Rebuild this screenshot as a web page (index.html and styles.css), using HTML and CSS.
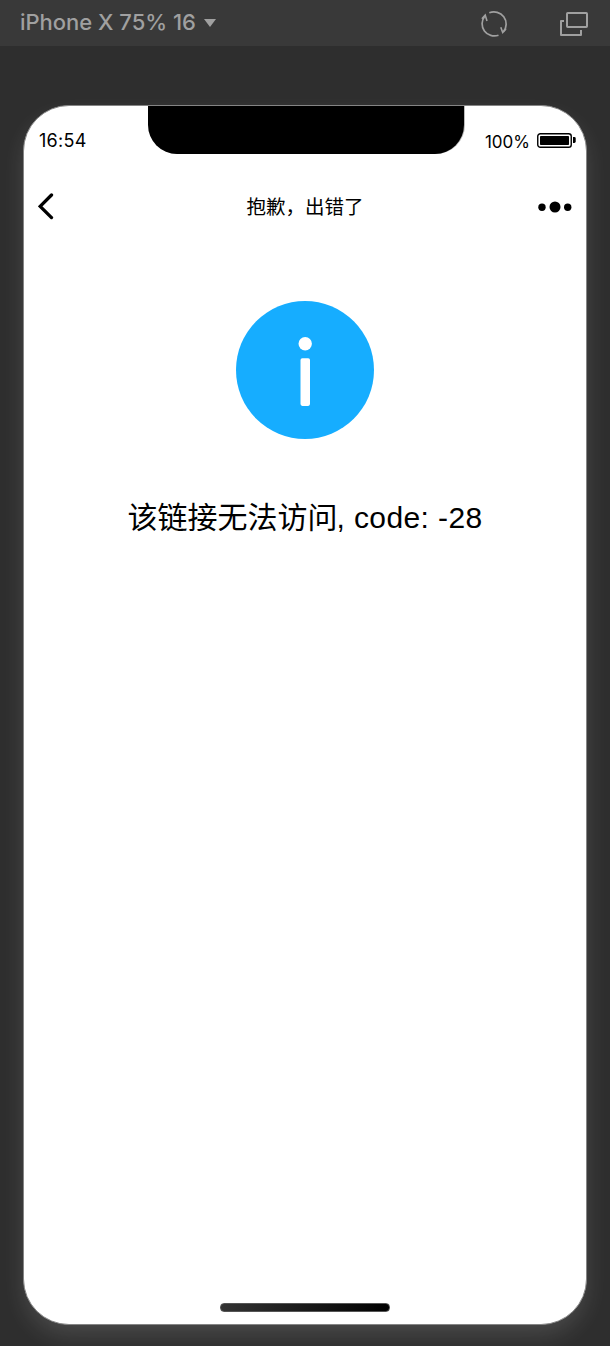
FILE: index.html
```html
<!DOCTYPE html>
<html lang="zh-CN">
<head>
<meta charset="utf-8">
<title>抱歉，出错了</title>
<link rel="stylesheet" href="styles.css">
</head>
<body>
<header class="toolbar">
  <div class="device"><span class="device-name">iPhone X 75% 16</span><svg width="12" height="8" viewBox="0 0 12 8"><path d="M0 0H12L6 8Z" fill="#a0a0a0"/></svg></div>
  <div class="tools">
    <svg width="28" height="28" viewBox="0 0 28 28" fill="none" stroke="#a0a0a0" stroke-width="1.7"><path d="M9.3 2.8A12.2 12.2 0 0 1 23.4 21.8M18.5 25.2A12.2 12.2 0 0 1 4.7 6.2"/><path d="M1.9 8.8L5.2 5L7 11M20.8 17.2L22.7 22.6L26 19" stroke-width="1.6"/></svg>
    <svg width="28" height="24" viewBox="0 0 28 24" fill="none" stroke="#a0a0a0" stroke-width="2" stroke-linejoin="round"><rect x="7" y="1" width="20" height="14" rx=".7"/><path d="M4 9H1V23H21V18"/></svg>
  </div>
</header>
<main class="stage">
  <section class="phone">
    <div class="notch"></div>
    <div class="status">
      <span class="time">16:54</span>
      <div class="power">
        <span class="percent">100%</span>
        <svg width="39" height="15" viewBox="0 0 39 15"><rect x=".75" y=".75" width="33.5" height="13.5" rx="2.6" fill="none" stroke="#000" stroke-width="1.4"/><rect x="3" y="3" width="29" height="9" rx=".8"/><path d="M36 4h1.3q1.4 0 1.4 1.4v3.2q0 1.4-1.4 1.4H36Z"/></svg>
      </div>
    </div>
    <nav class="nav">
      <svg class="back" width="16" height="27" viewBox="0 0 16 27" fill="none" stroke="#000" stroke-width="3.3" stroke-linecap="round"><path d="M13.5 2L2.2 13.3L13.5 24.6"/></svg>
      <h1 class="title">抱歉，出错了</h1>
      <svg class="more" width="34" height="12" viewBox="0 0 34 12"><circle cx="4" cy="6.3" r="3.7"/><circle cx="17" cy="6" r="5.5"/><circle cx="29.7" cy="6.3" r="3.7"/></svg>
    </nav>
    <div class="content">
      <svg width="138" height="138" viewBox="0 0 138 138"><circle cx="69" cy="69" r="69" fill="#16adff"/><circle cx="69.2" cy="42.7" r="6.7" fill="#fff"/><rect x="64.5" y="57.3" width="9.5" height="47.6" rx="1.8" fill="#fff"/></svg>
      <p class="message">该链接无法访问<span class="code">, code: -28</span></p>
    </div>
    <div class="home"></div>
  </section>
</main>
</body>
</html>
```
FILE: styles.css
```css
* { box-sizing: border-box; }
body {
  margin: 0;
  height: 1346px;
  overflow: hidden;
  background: #2e2e2e;
  color: #000;
  font-family: Inter, "Noto Sans CJK SC", sans-serif;
}
svg { display: block; flex: none; }
.toolbar {
  display: flex;
  justify-content: space-between;
  height: 46px;
  padding: 0 22px 0 20px;
  background: #393939;
}
.device {
  display: flex;
  align-items: center;
  gap: 8px;
  height: 46px;
}
.device-name {
  margin-top: -2px;
  color: #a0a0a0;
  font-size: 22px;
  font-weight: 450;
  line-height: 28px;
  letter-spacing: -0.02px;
  white-space: nowrap;
}
.tools {
  display: flex;
  align-items: center;
  gap: 52px;
  height: 48px;
}
.stage { padding: 59px 23px 0; }
.phone {
  position: relative;
  display: flex;
  flex-direction: column;
  height: 1220px;
  border: 1px solid #858585;
  border-radius: 46px;
  background: #fff;
  box-shadow: 0 11px 25px -2px rgba(255, 255, 255, 0.14);
}
.notch {
  position: absolute;
  top: 0;
  left: 124px;
  width: 316px;
  height: 48px;
  border-radius: 0 0 29px 29px;
  background: #000;
  box-shadow: 1px 0 0 #bbb;
}
.status {
  display: flex;
  justify-content: space-between;
  height: 66px;
  padding: 23px 10px 0 15px;
}
.time {
  font-size: 18px;
  line-height: 23px;
  letter-spacing: 0.3px;
}
.power {
  display: flex;
  align-items: flex-start;
  gap: 7px;
}
.power svg { margin-top: 4px; }
.percent {
  margin-top: 2px;
  font-size: 17px;
  line-height: 22px;
}
.nav {
  display: grid;
  grid-template-columns: 40px 1fr 40px;
  align-items: center;
  height: 70px;
  padding: 0 14px;
}
.back { margin-top: -1px; }
.title {
  margin: 0 0 2px;
  font: 400 19.5px/28px "Noto Sans CJK SC", sans-serif;
  text-align: center;
}
.more { justify-self: end; }
.content {
  display: flex;
  flex: 1;
  flex-direction: column;
  align-items: center;
  padding-top: 59px;
}
.message {
  margin: 58px 0 0;
  font: 30px/42px "Liberation Sans", "Noto Sans CJK SC", sans-serif;
  white-space: nowrap;
}
.code {
  margin-left: -1px;
  letter-spacing: 0.4px;
}
.home {
  align-self: center;
  width: 170px;
  height: 9px;
  margin-bottom: 12px;
  border: 1px solid #555;
  border-radius: 4px;
  background: linear-gradient(90deg, #333, #000);
}
```
